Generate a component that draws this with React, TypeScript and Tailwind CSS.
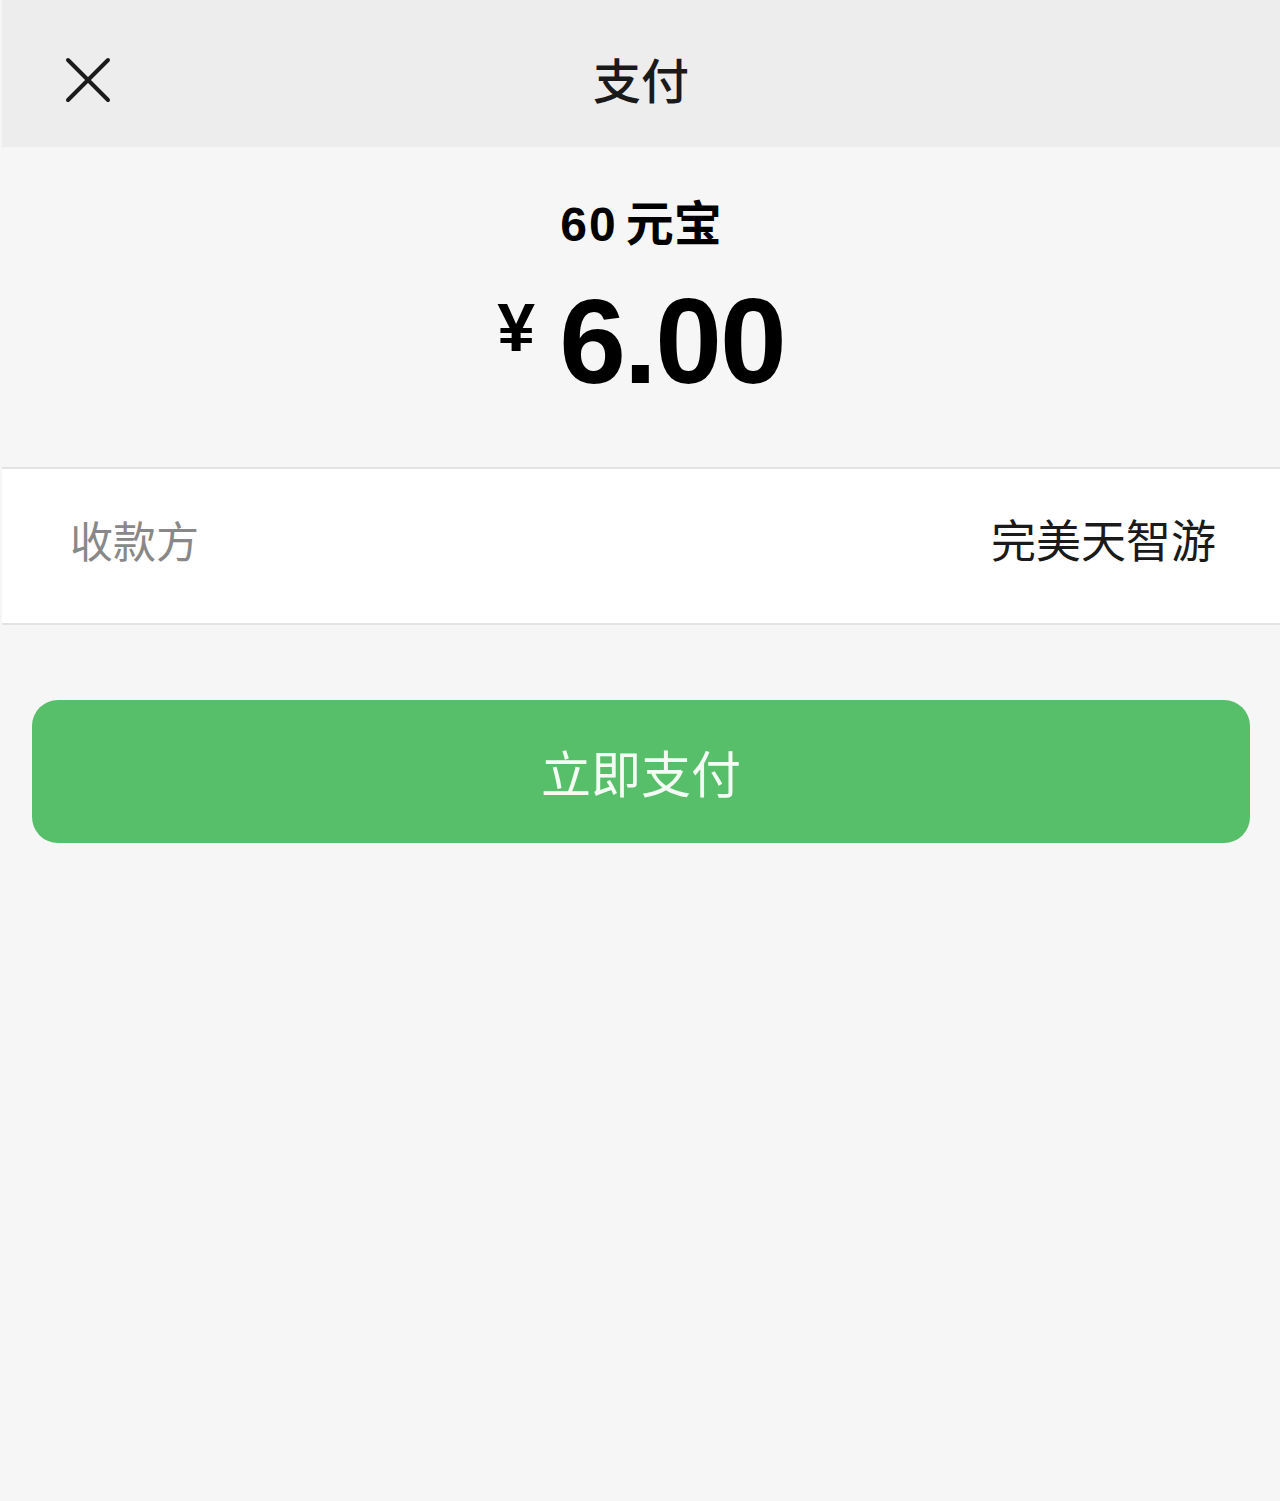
const cjk = { fontFamily: '"Noto Sans CJK SC", "Noto Sans", sans-serif' };
const num = { fontFamily: '"Liberation Sans", "Noto Sans CJK SC", sans-serif' };

const App = () => {
  return (
    <div className="min-h-[1501px] w-[1280px] bg-[#f6f6f6] pl-[2px]" style={cjk}>
      {/* Header */}
      <div className="relative flex h-[147px] items-center justify-center bg-[#ededed] pt-[8px]">
        <button className="absolute left-[62px] top-[56px] flex size-[48px] items-center justify-center">
          <svg width="46" height="46" viewBox="0 0 46 46" fill="none">
            <path d="M3 3L43 43M43 3L3 43" stroke="#1b1b1b" strokeWidth="4" strokeLinecap="round" />
          </svg>
        </button>
        <h1 className="text-[48px] font-medium leading-none text-[#1a1a1a]">支付</h1>
      </div>

      {/* Amount */}
      <div className="flex h-[322px] flex-col items-center border-b-2 border-[#e3e3e3]">
        <div className="mt-[49px] flex items-baseline text-[48px] font-bold leading-none text-black">
          <span className="tracking-[2px]" style={num}>60</span>
          <span className="ml-[8px]">元宝</span>
        </div>
        <div className="mt-[46px] flex items-start leading-none text-black">
          <span className="mt-[-2px] text-[68px] font-bold" style={num}>¥</span>
          <span className="ml-[24px] mt-[-14px] text-[120px] font-bold tracking-[-2px]" style={num}>6.00</span>
        </div>
      </div>

      {/* Payee */}
      <div className="flex h-[156px] items-center justify-between border-b-2 border-[#e3e3e3] bg-white pb-[14px] pl-[68px] pr-[64px]">
        <span className="text-[43px] text-[#888888]">收款方</span>
        <span className="text-[45px] text-[#1a1a1a]">完美天智游</span>
      </div>

      {/* Pay button */}
      <div className="px-[30px] pt-[75px]">
        <button className="flex h-[143px] w-full items-center justify-center rounded-[26px] bg-[#57bf6a] text-[50px] text-[#f4fbf5]">
          立即支付
        </button>
      </div>
    </div>
  );
};

export default App;
